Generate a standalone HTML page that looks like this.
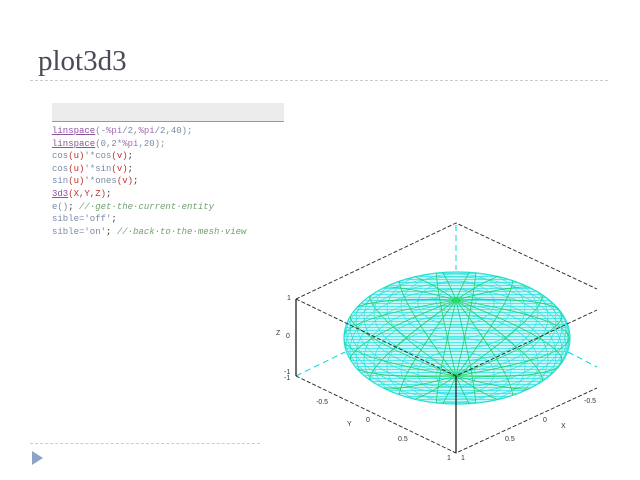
<!DOCTYPE html>
<html><head><meta charset="utf-8"><style>
body{margin:0;width:640px;height:480px;background:#fff;position:relative;overflow:hidden;font-family:"Liberation Sans",sans-serif}
.t{position:absolute;left:38px;top:45px;font:29px "Liberation Serif",serif;color:#4a4a58}
.hl{position:absolute;left:30px;width:578px;border-top:1.5px dashed #c8ccd4;height:0}
.bar{position:absolute;left:52px;top:103px;width:232px;height:18px;background:#ececec;border-bottom:1px solid #999}
.code{position:absolute;left:52px;top:125px;font:9px/12.6px "Liberation Mono",monospace;color:#7a8aa8;white-space:pre}
.u{color:#9050a0;text-decoration:underline}.p{color:#a070b0}.r{color:#c03030}.c{color:#70a070;font-style:italic}.k{color:#333}
</style></head><body>
<div class="t">plot3d3</div>
<div class="hl" style="top:80px"></div>
<div class="hl" style="top:443px;width:230px"></div>
<div class="bar"></div>
<div class="code"><span class="u">linspace</span>(-<span class="p">%pi</span>/2,<span class="p">%pi</span>/2,40);
<span class="u">linspace</span>(0,2*<span class="p">%pi</span>,20);
cos<span class="r">(u)</span>'*cos<span class="r">(v)</span><span class="k">;</span>
cos<span class="r">(u)</span>'*sin<span class="r">(v)</span><span class="k">;</span>
sin<span class="r">(u)</span>'*ones<span class="r">(v)</span><span class="k">;</span>
<span class="u">3d3</span><span class="r">(X,Y,Z)</span><span class="k">;</span>
e()<span class="k">;</span> <span class="c">//·get·the·current·entity</span>
sible='off'<span class="k">;</span>
sible='on'<span class="k">;</span> <span class="c">//·back·to·the·mesh·view</span></div>
<svg style="position:absolute;left:0;top:0" width="640" height="480">
<polygon points="32,451 32,465 43,458" fill="#8ea4c4"/>
<g stroke="#00d8d8" stroke-width="1" stroke-dasharray="6,4" fill="none">
<line x1="456" y1="225" x2="456" y2="270"/><line x1="296" y1="376" x2="345" y2="352"/><line x1="568" y1="352" x2="597" y2="367"/>
</g>
<defs><clipPath id="e"><ellipse cx="457" cy="338" rx="113" ry="66"/></clipPath>
<pattern id="h" width="4" height="3" patternUnits="userSpaceOnUse"><rect width="4" height="1" fill="#50e8e8"/></pattern></defs>
<ellipse cx="457" cy="338" rx="113" ry="66" fill="#c8f6f6" stroke="#20e0d0" stroke-width="1.2"/>
<ellipse cx="457" cy="338" rx="113" ry="66" fill="url(#h)"/>
<g clip-path="url(#e)" fill="none" stroke="#30e0e0" stroke-width="0.7">
<ellipse cx="456" cy="338" rx="113" ry="66"/><ellipse cx="456" cy="334" rx="112" ry="65"/><ellipse cx="456" cy="342" rx="112" ry="65"/>
<ellipse cx="456" cy="329" rx="110" ry="64"/><ellipse cx="456" cy="347" rx="110" ry="64"/>
<ellipse cx="456" cy="325" rx="106" ry="62"/><ellipse cx="456" cy="351" rx="106" ry="62"/>
<ellipse cx="456" cy="321" rx="100" ry="58"/><ellipse cx="456" cy="355" rx="100" ry="58"/>
<ellipse cx="456" cy="317" rx="92" ry="54"/><ellipse cx="456" cy="359" rx="92" ry="54"/>
<ellipse cx="456" cy="313" rx="82" ry="48"/><ellipse cx="456" cy="363" rx="82" ry="48"/>
<ellipse cx="456" cy="309" rx="69" ry="40"/><ellipse cx="456" cy="367" rx="69" ry="40"/>
<ellipse cx="456" cy="306" rx="55" ry="32"/><ellipse cx="456" cy="370" rx="55" ry="32"/>
<ellipse cx="456" cy="303" rx="38" ry="22"/><ellipse cx="456" cy="373" rx="38" ry="22"/>
<ellipse cx="456" cy="301" rx="20" ry="12"/><ellipse cx="456" cy="375" rx="20" ry="12"/>
</g>
<g clip-path="url(#e)" fill="none" stroke="#20d060" stroke-width="0.8">
<path d="M456,300Q682,338 456,376M456,300Q668,383 456,376M456,300Q629,423 456,376M456,300Q569,452 456,376M456,300Q495,468 456,376M456,300Q417,468 456,376M456,300Q343,452 456,376M456,300Q283,423 456,376M456,300Q244,383 456,376M456,300Q230,338 456,376M456,300Q244,293 456,376M456,300Q283,253 456,376M456,300Q343,224 456,376M456,300Q417,208 456,376M456,300Q495,208 456,376M456,300Q569,224 456,376M456,300Q629,253 456,376M456,300Q668,293 456,376"/>
</g>
<circle cx="456" cy="300" r="3" fill="#20e060"/>
<g stroke="#222" stroke-width="0.9" fill="none" stroke-dasharray="4,2">
<polyline points="296,299 456,223 597,289"/>
<polyline points="296,299 456,376 597,310"/>
<polyline points="296,376 456,453 597,388"/>
</g>
<g stroke="#111" stroke-width="1.2"><line x1="296" y1="299" x2="296" y2="376"/><line x1="456" y1="376" x2="456" y2="453"/></g>
<g font-family="Liberation Sans" font-size="7" fill="#333">
<text x="287" y="300">1</text><text x="286" y="338">0</text><text x="276" y="335">Z</text><text x="284" y="374">-1</text><text x="284" y="380">-1</text>
<text x="316" y="404">-0.5</text><text x="347" y="426">Y</text><text x="366" y="422">0</text><text x="398" y="441">0.5</text><text x="447" y="460">1</text><text x="461" y="460">1</text>
<text x="584" y="403">-0.5</text><text x="543" y="422">0</text><text x="561" y="428">X</text><text x="505" y="441">0.5</text>
</g>
</svg>
</body></html>
